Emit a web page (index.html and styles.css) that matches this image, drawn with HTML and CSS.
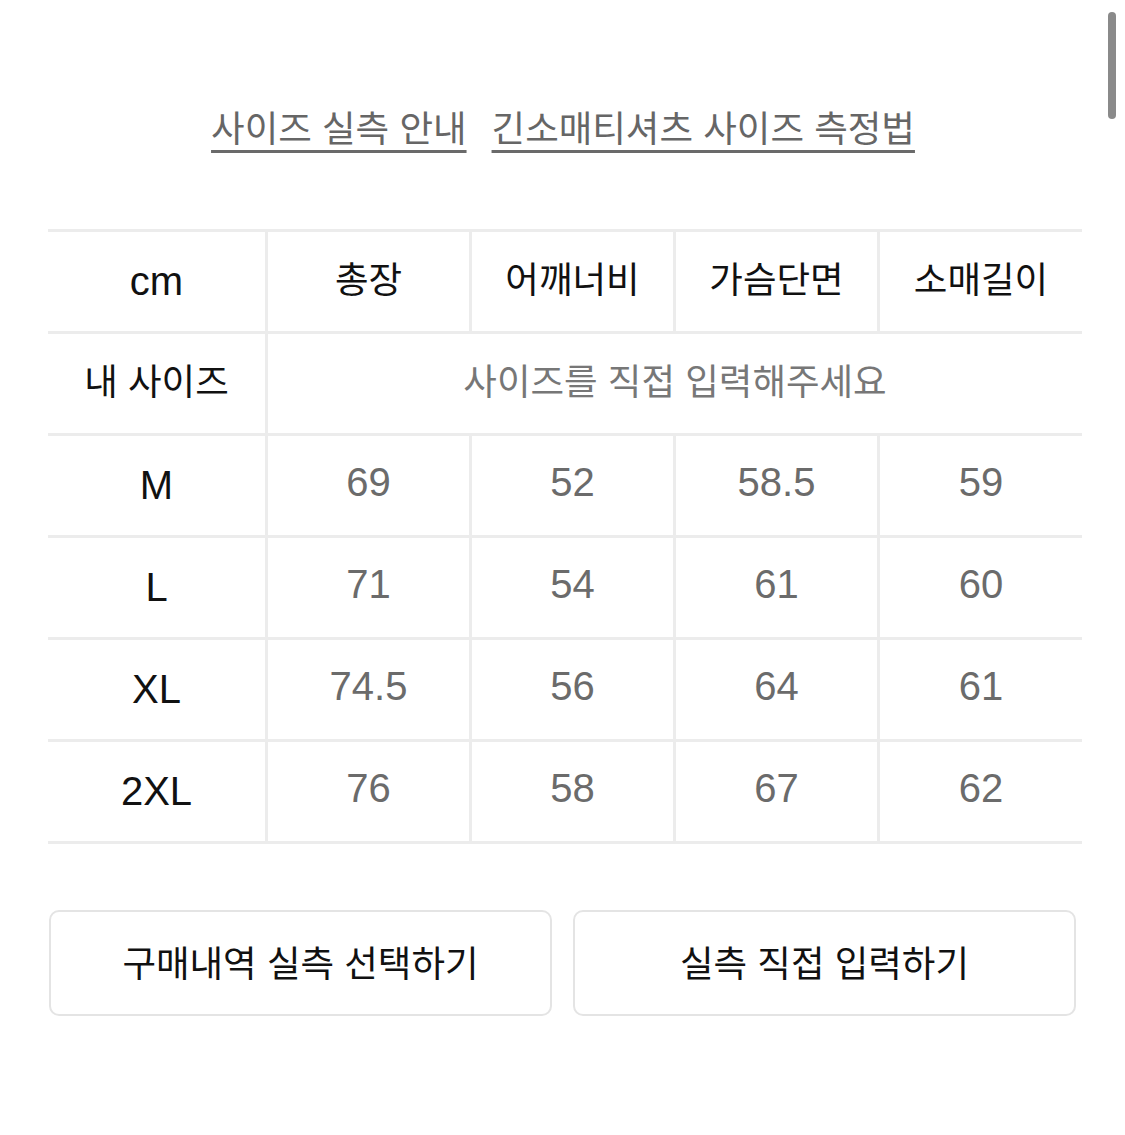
FILE: index.html
```html
<!DOCTYPE html>
<html lang="ko">
<head>
<meta charset="utf-8">
<link rel="stylesheet" href="styles.css">
</head>
<body>
<div class="page">
  <div class="links">
    <a class="link">사이즈 실측 안내</a>
    <a class="link">긴소매티셔츠 사이즈 측정법</a>
  </div>
  <div class="table">
    <div class="cell head">cm</div>
    <div class="cell head ko">총장</div>
    <div class="cell head ko">어깨너비</div>
    <div class="cell head ko">가슴단면</div>
    <div class="cell head ko last">소매길이</div>

    <div class="cell head ko">내 사이즈</div>
    <div class="cell placeholder span last">사이즈를 직접 입력해주세요</div>

    <div class="cell head">M</div>
    <div class="cell val">69</div>
    <div class="cell val">52</div>
    <div class="cell val">58.5</div>
    <div class="cell val last">59</div>

    <div class="cell head">L</div>
    <div class="cell val">71</div>
    <div class="cell val">54</div>
    <div class="cell val">61</div>
    <div class="cell val last">60</div>

    <div class="cell head">XL</div>
    <div class="cell val">74.5</div>
    <div class="cell val">56</div>
    <div class="cell val">64</div>
    <div class="cell val last">61</div>

    <div class="cell head">2XL</div>
    <div class="cell val">76</div>
    <div class="cell val">58</div>
    <div class="cell val">67</div>
    <div class="cell val last">62</div>
  </div>
  <div class="buttons">
    <button class="btn">구매내역 실측 선택하기</button>
    <button class="btn">실측 직접 입력하기</button>
  </div>
</div>
<div class="scrollbar"></div>
</body>
</html>
```

FILE: styles.css
```css
* { box-sizing: border-box; }
html, body {
  margin: 0;
  padding: 0;
  background: #fff;
}
body {
  font-family: "Liberation Sans", "Noto Sans CJK KR", sans-serif;
  color: #111;
}
.page {
  padding: 101px 43px 0 48px;
  width: 1125px;
}
.links {
  display: flex;
  justify-content: center;
  gap: 25px;
  height: 128px;
  padding-right: 4px;
}
.link {
  font-family: "Noto Sans CJK KR", sans-serif;
  font-size: 36.5px;
  line-height: 52px;
  color: #666;
  text-decoration: underline;
  text-decoration-thickness: 3px;
  text-underline-offset: 8px;
  text-decoration-color: #6a6a6a;
}
.table {
  display: grid;
  grid-template-columns: 220px 204px 204px 204px 202px;
  grid-auto-rows: 102px;
  border-top: 3px solid #ececec;
  width: 1034px;
}
.cell {
  display: flex;
  align-items: center;
  justify-content: center;
  border-bottom: 3px solid #ececec;
  border-right: 3px solid #ececec;
  font-size: 40px;
  line-height: 1;
}
.cell.last { border-right: none; }
.head {
  color: #111;
  padding-bottom: 1px;
}
.head.ko {
  font-family: "Noto Sans CJK KR", sans-serif;
  font-size: 36.5px;
  padding-bottom: 6px;
}
.val {
  color: #6b6b6b;
  padding-bottom: 8px;
}
.placeholder {
  grid-column: span 4;
  font-family: "Noto Sans CJK KR", sans-serif;
  font-size: 36.5px;
  color: #777;
  padding-bottom: 6px;
}
.buttons {
  display: flex;
  gap: 21px;
  margin-top: 66px;
  width: 1027px;
  margin-left: 1px;
}
.btn {
  flex: 1;
  height: 106px;
  background: #fff;
  border: 2px solid #e4e4e4;
  border-radius: 10px;
  font-family: "Noto Sans CJK KR", sans-serif;
  font-size: 36.5px;
  color: #111;
  padding: 0 0 4px;
}
.scrollbar {
  position: absolute;
  top: 12px;
  left: 1108px;
  width: 8px;
  height: 107px;
  border-radius: 4px;
  background: #8a8a8a;
}
```
